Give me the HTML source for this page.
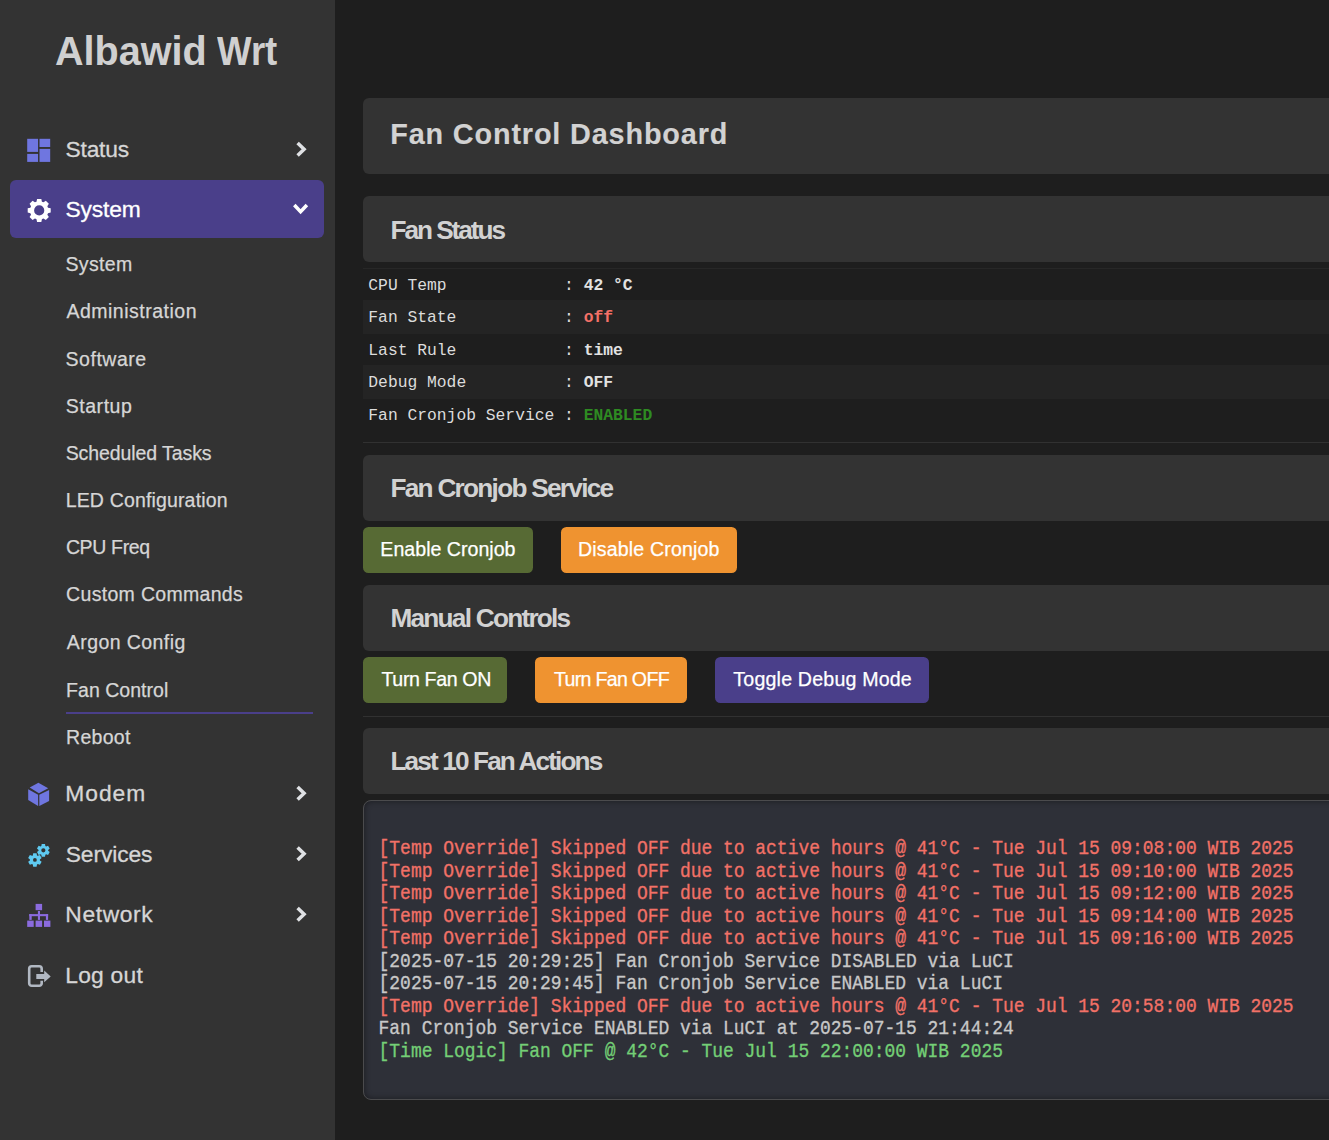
<!DOCTYPE html>
<html lang="en">
<head>
<meta charset="utf-8">
<title>Albawid Wrt - Fan Control</title>
<style>
*{box-sizing:border-box;margin:0;padding:0}
html,body{width:1329px;height:1140px;overflow:hidden;background:#1e1e1e;font-family:"Liberation Sans",sans-serif;color:#ccc}
#side{position:absolute;left:0;top:0;width:335px;height:1140px;background:#333}
#act{position:absolute;left:10px;top:180px;width:314px;height:58px;border-radius:6px;background:#4a3f8a}
#ul{position:absolute;left:66px;top:711.8px;width:247px;height:2.4px;background:#4a3f8a}
#ico{position:absolute;left:0;top:0}
.tx{position:absolute;line-height:1;white-space:nowrap}
.lg{font-weight:bold;color:#d0d0d0;transform-origin:0 0}
.mt{color:#d6d6d6;-webkit-text-stroke:0.3px}
.st{color:#d6d6d6;-webkit-text-stroke:0.25px}
.w{color:#fff}
.hh{font-weight:bold;color:#d2d2d2}
#h2{-webkit-text-stroke:0.15px #d2d2d2}
.bt{color:#fff;-webkit-text-stroke:0.25px}
.pn{position:absolute;left:363px;width:1000px;background:#333;border-radius:6px}
.hr{position:absolute;left:363px;width:1000px}
.alt{position:absolute;left:363px;width:1000px;height:34px;background:#242424}
.row{position:absolute;left:368.3px;height:32px;font-family:"Liberation Mono",monospace;font-size:16.32px;line-height:32px;color:#dcdcdc;white-space:pre}
.btn{position:absolute;display:block;height:46.1px;border-radius:5.5px}
h1,h2,h3{font-size:inherit;font-weight:normal}
a{color:inherit;text-decoration:none}
.g{background:#576a34}.o{background:#ef9330}.p{background:#4a3f8a}
#log{position:absolute;left:363px;top:800px;width:1000px;height:299.6px;background:#2e3038;border:1px solid #4b4b4d;border-radius:8px;box-shadow:inset 0 0 6px rgba(0,0,0,.45)}
#logt{position:absolute;left:378.6px;top:838px;font-family:"Liberation Mono",monospace;font-size:17.96px;line-height:20.737px;white-space:pre;color:#c8c8c8;transform:scaleY(1.085);transform-origin:0 0;-webkit-text-stroke:0.3px}
.r{color:#f27167}.gr{color:#74cf76}
</style>
</head>
<body>
<nav id="side">
<div id="act"></div>
<div id="ul"></div>
<svg id="ico" width="335" height="1140" viewBox="0 0 335 1140">
<g fill="#6f76e0"><rect x="27.2" y="138.8" width="10.85" height="13.1"/><rect x="27.2" y="153.9" width="10.85" height="8"/><rect x="39.5" y="138.8" width="10.7" height="8.2"/><rect x="39.5" y="148.9" width="10.7" height="13"/></g>
<path d="M297.6 143.00L304.1 149.30L297.6 155.50" fill="none" stroke="#dfe1e4" stroke-width="3.5" stroke-linecap="butt" stroke-linejoin="miter"/>
<path d="M297.6 787.00L304.1 793.30L297.6 799.50" fill="none" stroke="#dfe1e4" stroke-width="3.5" stroke-linecap="butt" stroke-linejoin="miter"/>
<path d="M297.6 847.50L304.1 853.80L297.6 860.00" fill="none" stroke="#dfe1e4" stroke-width="3.5" stroke-linecap="butt" stroke-linejoin="miter"/>
<path d="M297.6 908.00L304.1 914.30L297.6 920.50" fill="none" stroke="#dfe1e4" stroke-width="3.5" stroke-linecap="butt" stroke-linejoin="miter"/>
<path d="M294.3 205L300.6 211.6L306.9 205" fill="none" stroke="#fff" stroke-width="3.5" stroke-linecap="butt" stroke-linejoin="miter"/>
<path fill="#fff" fill-rule="evenodd" d="M36.50 201.66L37.05 198.95L41.35 198.95L41.90 201.66A9.2 9.2 0 0 1 43.51 202.32L45.81 200.80L48.85 203.84L47.33 206.14A9.2 9.2 0 0 1 47.99 207.75L50.70 208.30L50.70 212.60L47.99 213.15A9.2 9.2 0 0 1 47.33 214.76L48.85 217.06L45.81 220.10L43.51 218.58A9.2 9.2 0 0 1 41.90 219.24L41.35 221.95L37.05 221.95L36.50 219.24A9.2 9.2 0 0 1 34.89 218.58L32.59 220.10L29.55 217.06L31.07 214.76A9.2 9.2 0 0 1 30.41 213.15L27.70 212.60L27.70 208.30L30.41 207.75A9.2 9.2 0 0 1 31.07 206.14L29.55 203.84L32.59 200.80L34.89 202.32A9.2 9.2 0 0 1 36.50 201.66ZM34.10 210.45a5.1 5.1 0 1 0 10.20 0a5.1 5.1 0 1 0 -10.20 0Z"/>
<g fill="#6f76e0"><path d="M38.4 782.7L48.2 788.3L38.9 793.2L29.7 787.6Z"/><path d="M28.2 789.3L38.1 794.7V806L28.2 800.1Z"/><path d="M39.3 794.7L49.1 789.9V801L39.3 806Z"/></g>
<path fill="#5fcaf1" fill-rule="evenodd" d="M32.80 855.41L33.20 853.16L36.60 853.16L37.00 855.41A5.0 5.0 0 0 1 37.78 855.86L39.93 855.08L41.63 858.03L39.88 859.50A5.0 5.0 0 0 1 39.88 860.40L41.63 861.87L39.93 864.82L37.78 864.04A5.0 5.0 0 0 1 37.00 864.49L36.60 866.74L33.20 866.74L32.80 864.49A5.0 5.0 0 0 1 32.02 864.04L29.87 864.82L28.17 861.87L29.92 860.40A5.0 5.0 0 0 1 29.92 859.50L28.17 858.03L29.87 855.08L32.02 855.86A5.0 5.0 0 0 1 32.80 855.41ZM33.00 859.95a1.9 1.9 0 1 0 3.80 0a1.9 1.9 0 1 0 -3.80 0Z"/>
<path fill="#5fcaf1" fill-rule="evenodd" d="M41.35 845.99L41.70 843.96L45.00 843.96L45.35 845.99A4.8 4.8 0 0 1 46.13 846.44L48.06 845.73L49.71 848.58L48.13 849.90A4.8 4.8 0 0 1 48.13 850.80L49.71 852.12L48.06 854.97L46.13 854.26A4.8 4.8 0 0 1 45.35 854.71L45.00 856.74L41.70 856.74L41.35 854.71A4.8 4.8 0 0 1 40.57 854.26L38.64 854.97L36.99 852.12L38.57 850.80A4.8 4.8 0 0 1 38.57 849.90L36.99 848.58L38.64 845.73L40.57 846.44A4.8 4.8 0 0 1 41.35 845.99ZM41.25 850.35a2.1 2.1 0 1 0 4.20 0a2.1 2.1 0 1 0 -4.20 0Z"/>
<g fill="#8b6bde"><rect x="35.6" y="903.9" width="6.5" height="6.3"/><rect x="37.9" y="911" width="2.1" height="8.9"/><rect x="29.3" y="914.1" width="18.8" height="2.1"/><rect x="29.3" y="914.1" width="2.4" height="5.8"/><rect x="45.9" y="914.1" width="2.2" height="5.8"/><rect x="27.2" y="920.6" width="6.5" height="6.3"/><rect x="35.6" y="920.6" width="6.5" height="6.3"/><rect x="44" y="920.6" width="6.4" height="6.3"/></g>
<path d="M41.7 972V968.8a2.5 2.5 0 0 0 -2.5 -2.5H31.7a2.5 2.5 0 0 0 -2.5 2.5V983.3a2.5 2.5 0 0 0 2.5 2.5H39.2a2.5 2.5 0 0 0 2.5 -2.5V980.8" fill="none" stroke="#b1b8c2" stroke-width="2.6"/>
<path fill="#b1b8c2" d="M36.3 974.1H44.2V970.6L50.7 976.4L44.2 982.2V979H36.3Z"/>
</svg>
<h1><span id="lg1" class="tx lg" style="left:55.11px;top:31.12px;font-size:40.5px;transform:scaleX(0.9771)">Albawid</span> <span id="lg2" class="tx lg" style="left:217.06px;top:31.12px;font-size:40.5px;transform:scaleX(0.9035)">Wrt</span></h1>
<a id="m1" class="tx mt" style="left:65.60px;top:138.00px;font-size:22.8px;letter-spacing:-0.236px">Status</a>
<a id="m2" class="tx mt w" style="left:65.56px;top:197.70px;font-size:22.8px;letter-spacing:-0.169px">System</a>
<a id="s1" class="tx st" style="left:65.51px;top:255.29px;font-size:19.5px;letter-spacing:0.338px">System</a>
<a id="s2" class="tx st" style="left:66.42px;top:301.59px;font-size:19.5px;letter-spacing:0.503px">Administration</a>
<a id="s3" class="tx st" style="left:65.51px;top:350.09px;font-size:19.5px;letter-spacing:0.538px">Software</a>
<a id="s4" class="tx st" style="left:65.67px;top:397.09px;font-size:19.5px;letter-spacing:0.553px">Startup</a>
<a id="s5" class="tx st" style="left:65.67px;top:443.69px;font-size:19.5px;letter-spacing:-0.082px">Scheduled Tasks</a>
<a id="s6" class="tx st" style="left:65.67px;top:490.89px;font-size:19.5px;letter-spacing:0.159px">LED Configuration</a>
<a id="s7" class="tx st" style="left:65.90px;top:537.89px;font-size:19.5px;letter-spacing:-0.349px">CPU Freq</a>
<a id="s8" class="tx st" style="left:66.11px;top:585.09px;font-size:19.5px;letter-spacing:0.310px">Custom Commands</a>
<a id="s9" class="tx st" style="left:66.84px;top:632.69px;font-size:19.5px;letter-spacing:0.419px">Argon Config</a>
<a id="s10" class="tx st" style="left:66.09px;top:681.29px;font-size:19.5px;letter-spacing:0.036px">Fan Control</a>
<a id="s11" class="tx st" style="left:66.09px;top:727.79px;font-size:19.5px;letter-spacing:0.273px">Reboot</a>
<a id="m3" class="tx mt" style="left:65.32px;top:781.60px;font-size:22.8px;letter-spacing:0.972px">Modem</a>
<a id="m4" class="tx mt" style="left:65.76px;top:842.70px;font-size:22.8px;letter-spacing:-0.104px">Services</a>
<a id="m5" class="tx mt" style="left:65.32px;top:902.90px;font-size:22.8px;letter-spacing:0.637px">Network</a>
<a id="m6" class="tx mt" style="left:65.32px;top:963.50px;font-size:22.8px;letter-spacing:0.226px">Log out</a>
</nav>
<main>
<div class="pn" style="top:98px;height:76px"></div>
<h2 id="h2" class="tx hh" style="left:390.26px;top:119.92px;font-size:28.8px;letter-spacing:0.853px">Fan Control Dashboard</h2>
<div class="pn" style="top:196px;height:66px"></div>
<h3 id="h31" class="tx hh" style="left:390.45px;top:216.52px;font-size:26.2px;letter-spacing:-2.032px">Fan Status</h3>
<div class="hr" style="top:267.6px;height:1.4px;background:#272727"></div>
<div class="alt" style="top:300px"></div>
<div class="alt" style="top:365px"></div>
<div class="row" style="top:269.50px">CPU Temp            : <b style="color:#e2e2e2">42 °C</b></div>
<div class="row" style="top:302.00px">Fan State           : <b style="color:#f47067">off</b></div>
<div class="row" style="top:334.50px">Last Rule           : <b style="color:#e2e2e2">time</b></div>
<div class="row" style="top:367.00px">Debug Mode          : <b style="color:#e2e2e2">OFF</b></div>
<div class="row" style="top:399.50px">Fan Cronjob Service : <b style="color:#2e8b22">ENABLED</b></div>
<div class="hr" style="top:441.7px;height:1.4px;background:#313131"></div>
<div class="pn" style="top:455px;height:66px"></div>
<h3 id="h32" class="tx hh" style="left:390.45px;top:475.02px;font-size:26.2px;letter-spacing:-1.723px">Fan Cronjob Service</h3>
<a class="btn g" style="left:363px;top:526.9px;width:170.3px"><span id="b1" class="tx bt" style="left:17.37px;top:13.01px;font-size:19.6px;letter-spacing:0.003px">Enable Cronjob</span></a>
<a class="btn o" style="left:561.2px;top:526.9px;width:176px"><span id="b2" class="tx bt" style="left:16.69px;top:13.01px;font-size:19.6px;letter-spacing:0.157px">Disable Cronjob</span></a>
<div class="pn" style="top:585px;height:66px"></div>
<h3 id="h33" class="tx hh" style="left:390.45px;top:605.02px;font-size:26.2px;letter-spacing:-1.743px">Manual Controls</h3>
<a class="btn g" style="left:363px;top:656.9px;width:144px"><span id="b3" class="tx bt" style="left:18.51px;top:13.01px;font-size:19.6px;letter-spacing:-0.378px">Turn Fan ON</span></a>
<a class="btn o" style="left:535.1px;top:656.9px;width:152px"><span id="b4" class="tx bt" style="left:18.86px;top:13.01px;font-size:19.6px;letter-spacing:-0.700px">Turn Fan OFF</span></a>
<a class="btn p" style="left:715px;top:656.9px;width:214.2px"><span id="b5" class="tx bt" style="left:18.36px;top:13.01px;font-size:19.6px;letter-spacing:0.189px">Toggle Debug Mode</span></a>
<div class="hr" style="top:715.7px;height:1.4px;background:#313131"></div>
<div class="pn" style="top:728px;height:66px"></div>
<h3 id="h34" class="tx hh" style="left:390.45px;top:748.02px;font-size:26.2px;letter-spacing:-1.867px">Last 10 Fan Actions</h3>
<div id="log"></div>
<pre id="logt"><span class="r">[Temp Override] Skipped OFF due to active hours @ 41°C - Tue Jul 15 09:08:00 WIB 2025
[Temp Override] Skipped OFF due to active hours @ 41°C - Tue Jul 15 09:10:00 WIB 2025
[Temp Override] Skipped OFF due to active hours @ 41°C - Tue Jul 15 09:12:00 WIB 2025
[Temp Override] Skipped OFF due to active hours @ 41°C - Tue Jul 15 09:14:00 WIB 2025
[Temp Override] Skipped OFF due to active hours @ 41°C - Tue Jul 15 09:16:00 WIB 2025
</span>[2025-07-15 20:29:25] Fan Cronjob Service DISABLED via LuCI
[2025-07-15 20:29:45] Fan Cronjob Service ENABLED via LuCI
<span class="r">[Temp Override] Skipped OFF due to active hours @ 41°C - Tue Jul 15 20:58:00 WIB 2025
</span>Fan Cronjob Service ENABLED via LuCI at 2025-07-15 21:44:24
<span class="gr">[Time Logic] Fan OFF @ 42°C - Tue Jul 15 22:00:00 WIB 2025</span></pre>
</main>
</body>
</html>
